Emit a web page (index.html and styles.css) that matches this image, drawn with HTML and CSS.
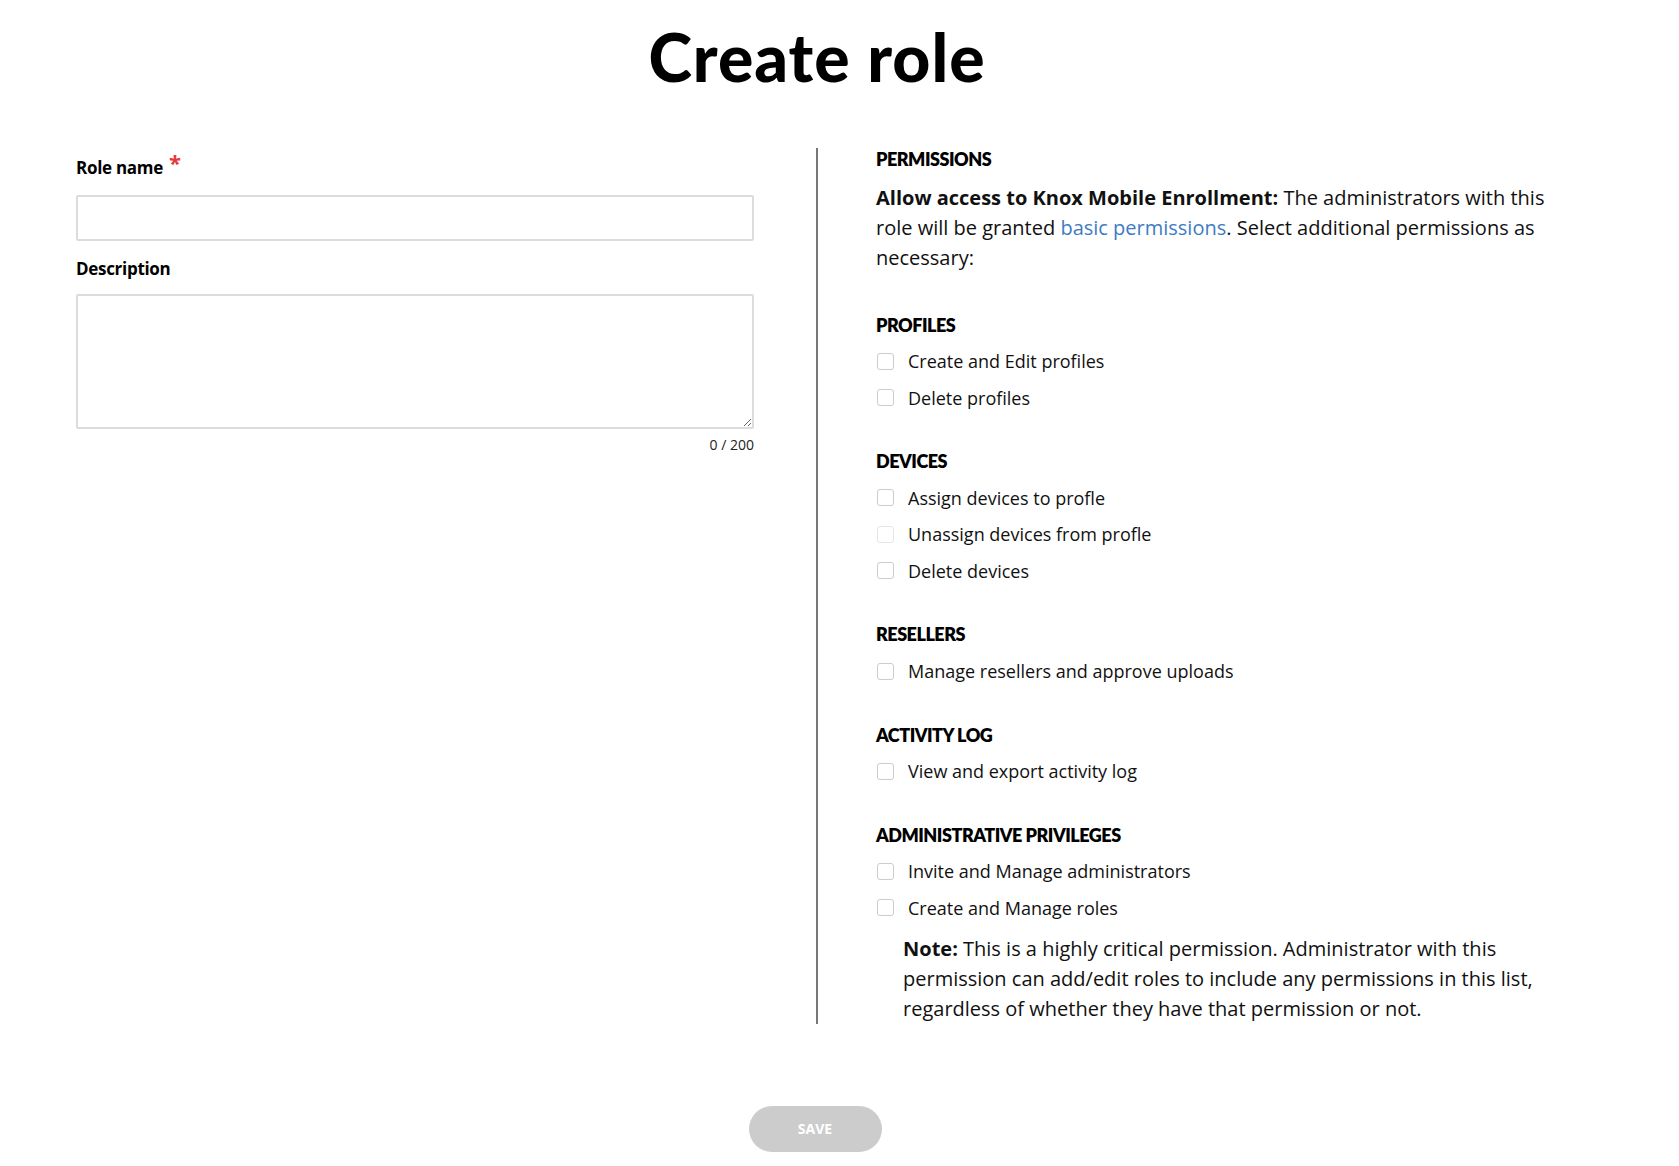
FILE: index.html
```html
<!DOCTYPE html>
<html>
<head>
<meta charset="utf-8">
<link rel="stylesheet" href="styles.css">
</head>
<body>
<div class="page">
  <h1 class="title">Create role</h1>
  <div class="main">
    <div class="left">
      <label class="label">Role name <span class="req">*</span></label>
      <input class="input" type="text">
      <label class="label label-desc">Description</label>
      <textarea class="textarea"></textarea>
      <div class="counter">0 / 200</div>
    </div>
    <div class="divider"></div>
    <div class="right">
      <div class="section-title">PERMISSIONS</div>
      <p class="intro"><b>Allow access to Knox Mobile Enrollment:</b> The administrators with this role will be granted <a class="link" href="#">basic permissions</a>. Select additional permissions as necessary:</p>

      <div class="group">
        <div class="section-title">PROFILES</div>
        <label class="item"><span class="box"></span>Create and Edit profiles</label>
        <label class="item"><span class="box"></span>Delete profiles</label>
      </div>

      <div class="group">
        <div class="section-title">DEVICES</div>
        <label class="item"><span class="box"></span>Assign devices to profle</label>
        <label class="item"><span class="box box-faint"></span>Unassign devices from profle</label>
        <label class="item"><span class="box"></span>Delete devices</label>
      </div>

      <div class="group">
        <div class="section-title">RESELLERS</div>
        <label class="item"><span class="box"></span>Manage resellers and approve uploads</label>
      </div>

      <div class="group">
        <div class="section-title">ACTIVITY LOG</div>
        <label class="item"><span class="box"></span>View and export activity log</label>
      </div>

      <div class="group">
        <div class="section-title">ADMINISTRATIVE PRIVILEGES</div>
        <label class="item"><span class="box"></span>Invite and Manage administrators</label>
        <label class="item"><span class="box"></span>Create and Manage roles</label>
        <p class="note"><b>Note:</b> This is a highly critical permission. Administrator with this permission can add/edit roles to include any permissions in this list, regardless of whether they have that permission or not.</p>
      </div>
    </div>
  </div>
  <div class="actions">
    <button class="save" type="button">SAVE</button>
  </div>
</div>
</body>
</html>
```

FILE: styles.css
```css
* { box-sizing: border-box; }
html, body { margin: 0; padding: 0; background: #fff; }
body {
  font-family: "Open Sans", "Noto Sans", sans-serif;
  color: #111;
  width: 1679px;
}
.page { width: 1634px; }
.title {
  margin: 0;
  padding-top: 17px;
  height: 148px;
  text-align: center;
  font-family: "Lato", sans-serif;
  font-weight: 900;
  font-size: 66px;
  letter-spacing: 1px;
  line-height: 80px;
  color: #000;
}
.main {
  display: flex;
  align-items: stretch;
  padding-left: 76px;
}
.left {
  width: 678px;
  display: flex;
  flex-direction: column;
  padding-top: 8px;
}
.label {
  font-family: "Open Sans", sans-serif;
  font-weight: 700;
  font-size: 17px;
  line-height: 24px;
  color: #000;
  letter-spacing: -0.3px;
}
.req { color: #e8383d; font-size: 22px; line-height: 10px; position: relative; top: -3px; margin-left: 2px; }
.input {
  margin-top: 15px;
  height: 46px;
  border: 2px solid #dcdcdc;
  border-radius: 2px;
  width: 100%;
}
.label-desc { margin-top: 16px; }
.textarea {
  margin-top: 13px;
  height: 135px;
  border: 2px solid #dcdcdc;
  border-radius: 2px;
  width: 100%;
  resize: vertical;
}
.counter {
  text-align: right;
  font-size: 14px;
  margin-top: 6px;
  color: #222;
}
.divider {
  width: 2px;
  background: #777;
  margin: 0 58px 0 62px;
  flex: none;
}
.right {
  width: 700px;
}
.section-title {
  font-family: "Lato", sans-serif;
  font-weight: 800;
  font-size: 18px;
  letter-spacing: -0.5px;
  line-height: 22px;
  color: #000;
  margin-bottom: 4px;
}
.group .section-title { margin-bottom: 0; padding-bottom: 1px; }
.intro {
  margin: 13px 0 0 0;
  font-size: 20px;
  line-height: 30px;
  color: #111;
}
.intro b { font-weight: 700; }
.link { color: #3e7bc4; text-decoration: none; }
.group { margin-top: 40.5px; }
.item {
  display: flex;
  align-items: center;
  font-size: 18px;
  line-height: 24px;
  height: 24px;
  margin-top: 12.6px;
  color: #111;
}
.box {
  width: 17px;
  height: 17px;
  border: 1px solid #ccc;
  border-radius: 3px;
  margin-right: 14px;
  margin-left: 1px;
  flex: none;
  background: #fff;
}
.box-faint { border-color: #e6e6e6; }
.note {
  margin: 14px 0 0 27px;
  font-size: 20px;
  line-height: 30px;
  color: #111;
}
.note b { font-weight: 700; }
.actions {
  display: flex;
  justify-content: center;
  width: 1630px;
  margin-top: 82px;
}
.save {
  width: 133px;
  height: 46px;
  border: none;
  border-radius: 23px;
  background: #cccccc;
  color: #fff;
  font-family: "Open Sans", sans-serif;
  font-weight: 700;
  font-size: 14px;
}
```
